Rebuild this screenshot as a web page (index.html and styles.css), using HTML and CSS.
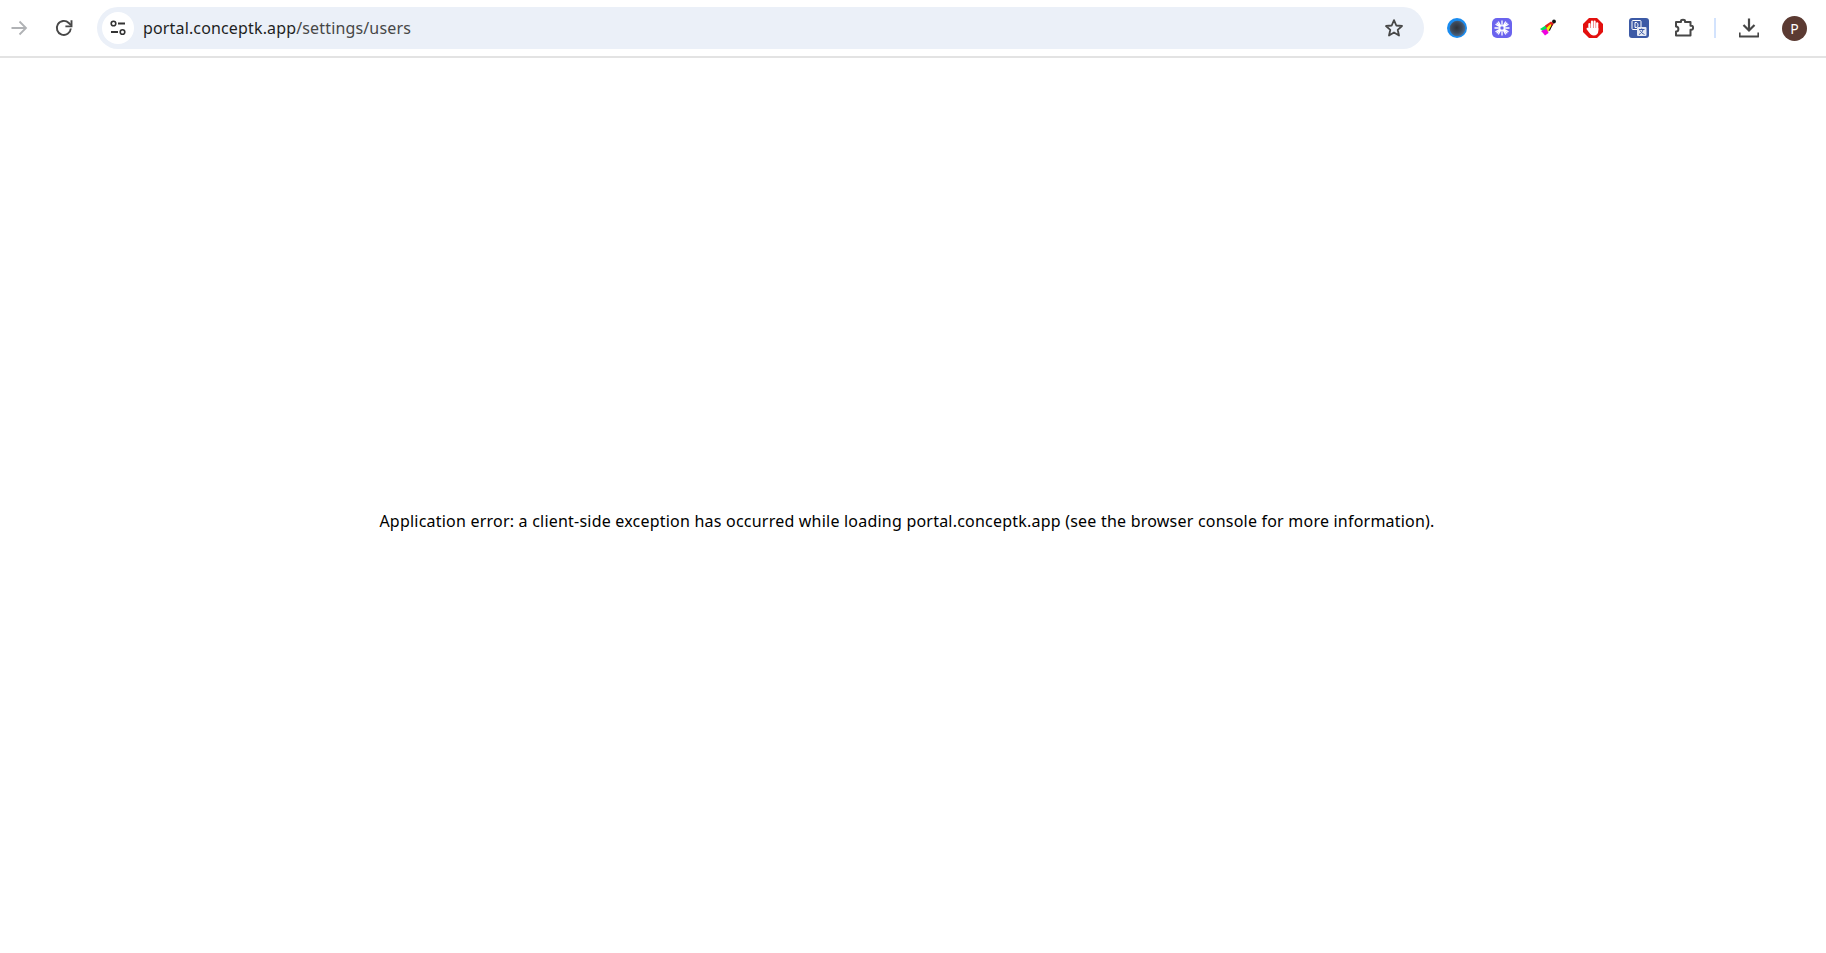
FILE: index.html
```html
<!DOCTYPE html>
<html lang="en">
<head>
<meta charset="utf-8">
<title>portal.conceptk.app/settings/users</title>
<link rel="stylesheet" href="styles.css">
</head>
<body>
<header class="toolbar">
  <span class="nav-btn nav-forward">
    <svg viewBox="0 0 20 20" width="20" height="20"><path d="M2.500 10H17M10.500 3.500L17 10L10.500 16.500" fill="none" stroke="#b0b2b5" stroke-width="1.800"/></svg>
  </span>
  <span class="nav-btn nav-reload">
    <svg viewBox="0 0 20 20" width="20" height="20"><path d="M16.800 10.500A7 7 0 1 1 14.800 5L17 7.200" fill="none" stroke="#474747" stroke-width="1.900"/><path d="M17.500 2.300V8.400H11.400" fill="none" stroke="#474747" stroke-width="1.900"/></svg>
  </span>
  <div class="omnibox">
    <span class="tune-chip">
      <svg viewBox="0 0 20 20" width="20" height="20"><circle cx="5.500" cy="5.500" r="2.300" fill="none" stroke="#333" stroke-width="1.600"/><path d="M10 5.500H17M3 14H10" stroke="#333" stroke-width="1.800" fill="none"/><circle cx="14.500" cy="14" r="2.300" fill="none" stroke="#333" stroke-width="1.600"/></svg>
    </span>
    <span class="url"><span class="url-host">portal.conceptk.app</span><span class="url-path">/settings/users</span></span>
    <svg class="star" viewBox="0 0 20 20" width="20" height="20"><path d="M10 2.200L12.300 7.500L18 8L13.700 11.800L15 17.500L10 14.500L5 17.500L6.300 11.800L2 8L7.700 7.500Z" fill="none" stroke="#474747" stroke-width="1.800" stroke-linejoin="round"/></svg>
  </div>
  <div class="actions">
    <svg class="icon" viewBox="0 0 20 20" width="20" height="20">
      <defs><radialGradient id="lens" cx="0.450" cy="0.450" r="0.550"><stop offset="0" stop-color="#2d3138"/><stop offset="0.600" stop-color="#3d4a5a"/><stop offset="1" stop-color="#4d6a8c"/></radialGradient></defs>
      <circle cx="10" cy="10" r="10" fill="#1a8cf0"/><circle cx="10.500" cy="10.500" r="7.800" fill="url(#lens)"/>
    </svg>
    <svg class="icon" viewBox="0 0 20 20" width="20" height="20"><rect width="20" height="20" rx="5" fill="#6a63ee"/><g stroke="#fff" stroke-width="1.300"><path d="M10 2.500V17.500M2.500 10H17.500M4.700 4.700L15.300 15.300M15.300 4.700L4.700 15.300M6.250 3.500L13.750 16.500M13.750 3.500L6.250 16.500M3.500 6.250L16.500 13.750M16.500 6.250L3.500 13.750"/></g><circle cx="10" cy="10" r="2.200" fill="#6a63ee" stroke="#fff" stroke-width="1"/></svg>
    <svg class="icon" viewBox="0 0 20 20" width="20" height="20"><path d="M2 11L7.500 7.500L10 11L5 13Z" fill="#00e060"/><path d="M3 13L9.500 10.500L10.500 15L7 17.500L5 15Z" fill="#f000e0"/><path d="M7 7.500L13 3.500L16 5.500L11.500 12L9 11Z" fill="#e82020"/><path d="M8.500 10L12.500 6L13.500 7.500L10 14Z" fill="#f4f000"/><path d="M10.500 13L13.500 7.500L15 6L12 12.500Z" fill="#111"/><circle cx="16" cy="3.500" r="1.900" fill="#111"/></svg>
    <svg class="icon" viewBox="0 0 20 20" width="20" height="20">
      <path d="M6 0H14L20 6V14L14 20H6L0 14V6Z" fill="#e3100e"/>
      <g fill="#fff"><rect x="5.300" y="5" width="2.200" height="8" rx="1.100"/><rect x="7.900" y="2.600" width="2.200" height="9" rx="1.100"/><rect x="10.500" y="2.600" width="2.200" height="9" rx="1.100"/><rect x="13.100" y="4.200" width="2.200" height="9" rx="1.100"/><path d="M5.300 10H15.300V13C15.300 15.800 13.500 17.500 10.800 17.500C8.700 17.500 7.500 16.500 6.500 15L3.600 11.200C3.200 9.600 4.700 9.300 5.300 10Z"/></g>
    </svg>
    <svg class="icon" viewBox="0 0 20 20" width="20" height="20"><rect width="20" height="20" rx="3" fill="#3c5aa6"/><rect x="3" y="2.500" width="9" height="9" rx="1" fill="#3c5aa6" stroke="#fff" stroke-width="1"/><path d="M6 4.500V9.500H7.200C9.600 9.500 9.600 4.500 7.200 4.500Z" fill="none" stroke="#fff" stroke-width="1"/><rect x="8" y="9" width="9.500" height="9" rx="1" fill="#e6eaf4"/><path d="M10 11.500H15.500M12.700 10.500V11.500M14 11.500C13.500 14 12 15.500 10 16.500M11 12.500C12 14.500 13.500 15.500 15.500 16.500" fill="none" stroke="#3c5aa6" stroke-width="1"/></svg>
    <svg class="icon" viewBox="0 0 20 20" width="20" height="20"><path d="M2 4H7V3C7 1.200 11 1.200 11 3V4H16.500V7.800H17.500C19.600 7.800 19.600 11.800 17.500 11.800H16.500V17.500H2V13.500C5.200 13.500 5.200 8.500 2 8.500Z" fill="none" stroke="#474747" stroke-width="2" stroke-linejoin="round"/></svg>
    <span class="divider"></span>
    <svg class="icon-download" viewBox="0 0 20 20" width="20" height="20"><path d="M10 0.500V12M4.500 7L10 12.500L15.500 7" fill="none" stroke="#474747" stroke-width="2.200"/><path d="M0.500 14.500V17.500A1 1 0 0 0 1.500 18.500H18.500A1 1 0 0 0 19.500 17.500V14.500" fill="none" stroke="#474747" stroke-width="2.200"/></svg>
    <span class="avatar">P</span>
  </div>
</header>
<main class="page">
  <p class="error">Application error: a client-side exception has occurred while loading portal.conceptk.app (see the browser console for more information).</p>
</main>
</body>
</html>
```

FILE: styles.css
```css
* { box-sizing: border-box; }
html, body { margin: 0; height: 100%; background: #fff; }
body {
  display: flex;
  flex-direction: column;
  font-family: "Noto Sans", "Open Sans", sans-serif;
  color: #000;
  overflow: hidden;
}
.toolbar {
  flex: none;
  height: 58px;
  display: flex;
  align-items: center;
  border-bottom: 2px solid #e3e3e3;
  padding: 0 19px 0 9px;
}
.nav-btn { display: flex; width: 20px; height: 20px; }
.nav-reload { margin-left: 25px; margin-right: 23px; }
.omnibox {
  flex: 1;
  height: 42px;
  display: flex;
  align-items: center;
  background: #ebf0f8;
  border-radius: 21px;
  padding: 0 20px 0 5px;
}
.tune-chip {
  width: 32px;
  height: 32px;
  border-radius: 50%;
  background: #fff;
  display: flex;
  align-items: center;
  justify-content: center;
}
.url { flex: 1; margin-left: 9px; font-size: 16px; letter-spacing: 0.15px; }
.url-host { color: #1f1f1f; }
.url-path { color: #474747; }
.actions { display: flex; align-items: center; margin-left: 23px; }
.icon { flex: none; margin-right: 25.4px; }
.divider { flex: none; width: 2px; height: 20px; background: #d3e3fd; margin-left: -5.4px; margin-right: 23px; }
.icon-download { flex: none; margin-right: 23px; }
.avatar {
  flex: none;
  width: 25px;
  height: 25px;
  border-radius: 50%;
  background: #5b3a32;
  color: #fff;
  font-size: 14px;
  display: flex;
  align-items: center;
  justify-content: center;
}
.page {
  flex: 1;
  display: flex;
  align-items: center;
  justify-content: center;
  padding-top: 30px;
  padding-right: 12px;
}
.error { margin: 0; font-size: 16px; line-height: 24px; letter-spacing: 0.215px; }
```
